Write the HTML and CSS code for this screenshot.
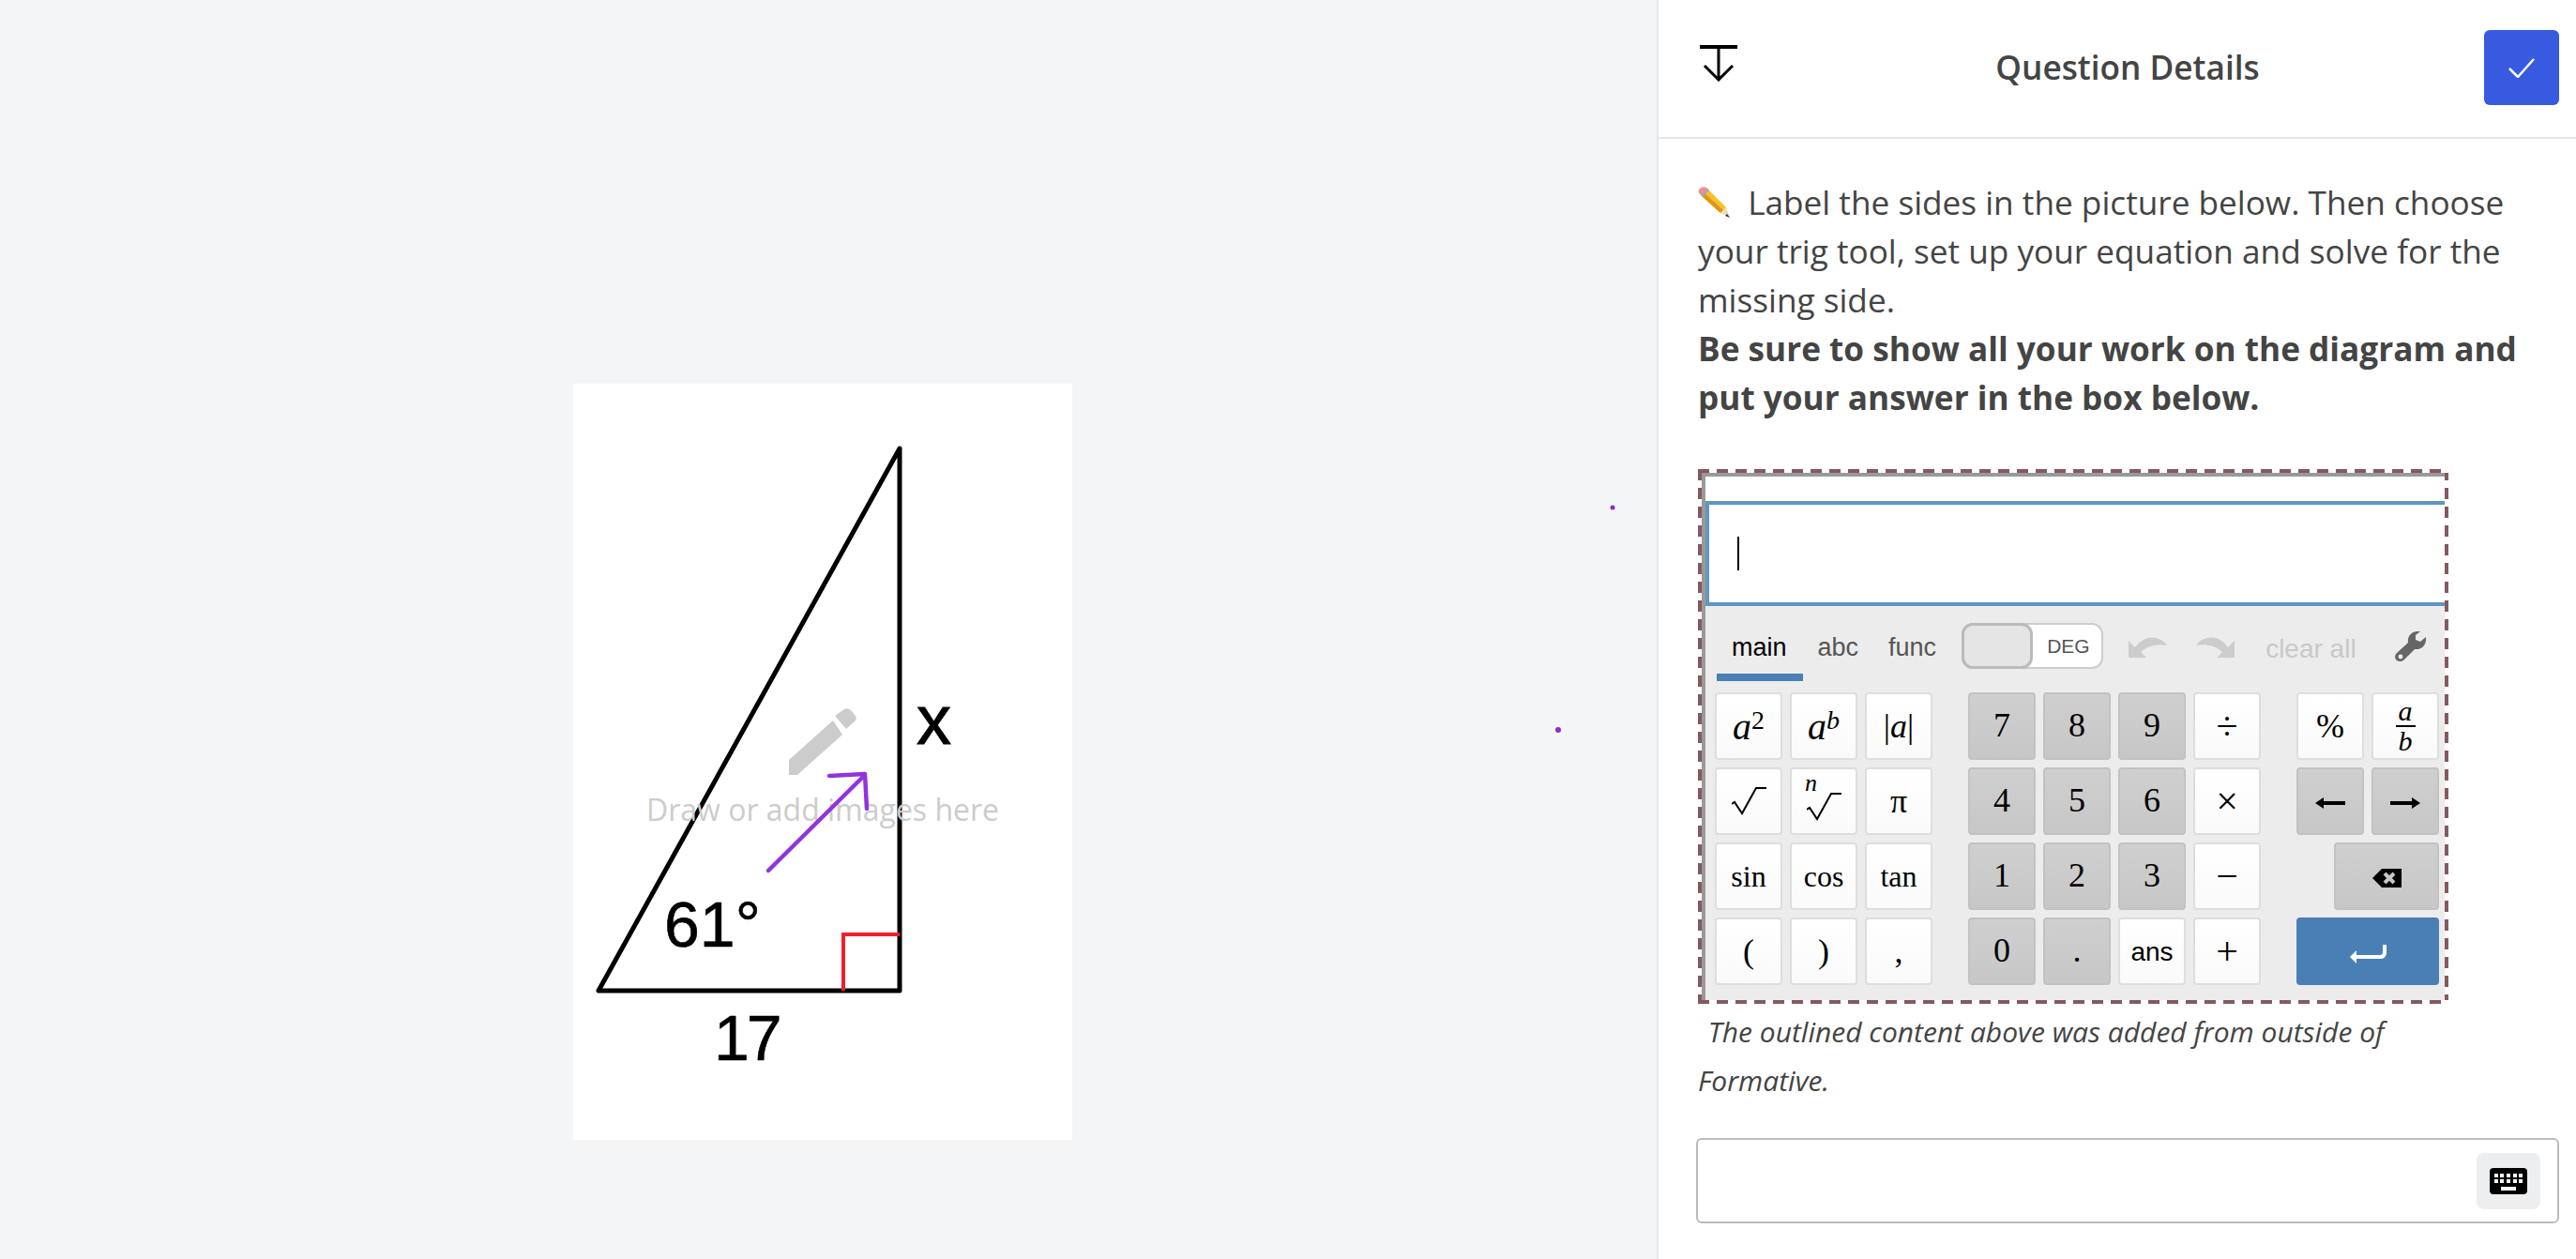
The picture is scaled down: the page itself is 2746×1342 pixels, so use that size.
FILE: index.html
```html
<!DOCTYPE html>
<html lang="en">
<head>
  <meta charset="UTF-8">
  <meta name="viewport" content="width=device-width, initial-scale=1.0">
  <title>Question Details</title>
  <link rel="stylesheet" href="styles.css">
</head>
<body>
  <div class="canvas">
    <div class="sheet">
      <!-- Worksheet picture -->
      <svg class="sheet-image" viewBox="0 0 532 806">
        <path class="tri" d="M348 69 L27 647 H348 Z"/>
        <path class="tri-mark" d="M348 587 H288 V647"/>
        <text class="tri-text" x="97" y="600" font-size="68">61°</text>
        <text class="tri-text tri-x" x="366" y="384" font-size="74">x</text>
        <text class="tri-text tri-17" x="150" y="721" font-size="68">17</text>
      </svg>
      <div class="hint">
        <svg class="hint-icon" viewBox="0 0 73 71">
          <path d="M0 55 L47 13 L57 28 L9 71 H0 Z"/>
          <path d="M49 8 L59 1 Q62 -1 66 2 L71 8 Q73 11 70 14 L61 22 Z"/>
        </svg>
        <div class="hint-text">Draw or add images here</div>
      </div>
    </div>
    <!-- Student ink on top of the canvas -->
    <svg class="ink" viewBox="0 0 1766 1342">
      <path d="M819 928 L922 826 M884 827 L922 825 L924 862"/>
      <circle cx="1719" cy="541" r="2.5"/>
      <circle cx="1661" cy="778" r="3"/>
    </svg>
  </div>

  <div class="panel">
    <div class="panel-header">
      <button class="collapse-btn" type="button">
        <svg width="40" height="39" viewBox="0 0 40 39">
          <path class="collapse-bar" d="M0 2 H40"/>
          <path d="M20 2 V37 M5 22 L20 37 L35 22"/>
        </svg>
      </button>
      <div class="panel-title">Question Details</div>
      <button class="done-btn" type="button">
        <svg width="28" height="21" viewBox="0 0 28 21"><path d="M1 11 L10 20 L27 1"/></svg>
      </button>
    </div>

    <div class="panel-body">
      <div class="prompt">
        <svg class="emoji" width="34" height="33" viewBox="0 0 34 33">
          <path fill="#f8c02c" d="M4 10 L11 3 L30 22 L24 28 Z"/>
          <path fill="#e2931a" d="M4 10 L7 7 L27 25 L24 28 Z"/>
          <path fill="#f6dcae" d="M24 28 L30 22 L34 33 Z"/>
          <path fill="#333" d="M31 29 L34 33 L29 31 Z"/>
          <path fill="#ef8f93" d="M2 8 Q-1 4 2 2 Q5 -1 9 1 L11 3 L4 10 Z"/>
          <path fill="#a4a9ad" d="M3 9 L10 2 L12 4 L5 11 Z"/>
        </svg>
        Label the sides in the picture below. Then choose your trig tool, set up your equation and solve for the missing side.<br>
        <strong>Be sure to show all your work on the diagram and put your answer in the box below.</strong>
      </div>

      <div class="embed">
        <div class="embed-inner">
          <div class="math-field"><span class="caret"></span></div>
          <div class="keypad">
            <div class="keypad-bar">
              <span class="tab tab-on">main</span>
              <span class="tab">abc</span>
              <span class="tab">func</span>
              <div class="deg-toggle"><span class="deg-knob"></span><span class="deg-label">DEG</span></div>
              <svg class="hist-icon undo" viewBox="0 0 41 24"><path d="M0 5 V23 H19 L13 17 C20 10 32 8 41 10 C33 -1 17 -2 7 12 Z"/></svg>
              <svg class="hist-icon redo" viewBox="0 0 41 24"><path d="M0 5 V23 H19 L13 17 C20 10 32 8 41 10 C33 -1 17 -2 7 12 Z"/></svg>
              <span class="clear-all">clear all</span>
              <svg class="wrench" viewBox="0 0 34 33">
                <path d="M33 6 L27 11 L22 9 L22 4 L27 0 C20 -1 13 3 14 12 L2 23 C-1 26 0 30 2 31 C5 33 8 32 10 30 L21 19 C29 20 34 14 33 6 Z"/>
                <circle cx="6" cy="27" r="2.4" fill="#ececec"/>
              </svg>
            </div>
            <div class="key-groups">
              <div class="key-group cols-3">
                <div class="key math"><i class="base">a</i><sup>2</sup></div>
                <div class="key math"><i class="base">a</i><sup><i>b</i></sup></div>
                <div class="key math">|<i>a</i>|</div>
                <div class="key">
                  <svg class="root-icon" width="37" height="30" viewBox="0 0 37 30"><path d="M0 18 L3 16 L11 28 L26 1 H37"/></svg>
                </div>
                <div class="key">
                  <span class="root-index">n</span>
                  <svg class="root-icon root-nth" width="37" height="30" viewBox="0 0 37 30"><path d="M0 18 L3 16 L11 28 L26 1 H37"/></svg>
                </div>
                <div class="key math">π</div>
                <div class="key fn">sin</div>
                <div class="key fn">cos</div>
                <div class="key fn">tan</div>
                <div class="key math">(</div>
                <div class="key math">)</div>
                <div class="key math">,</div>
              </div>
              <div class="key-group cols-4">
                <div class="key dark">7</div>
                <div class="key dark">8</div>
                <div class="key dark">9</div>
                <div class="key op">÷</div>
                <div class="key dark">4</div>
                <div class="key dark">5</div>
                <div class="key dark">6</div>
                <div class="key op">×</div>
                <div class="key dark">1</div>
                <div class="key dark">2</div>
                <div class="key dark">3</div>
                <div class="key op">−</div>
                <div class="key dark">0</div>
                <div class="key dark">.</div>
                <div class="key ans">ans</div>
                <div class="key op">+</div>
              </div>
              <div class="key-group cols-2">
                <div class="key math">%</div>
                <div class="key"><div class="frac"><i>a</i><i class="frac-b">b</i></div></div>
                <div class="key dark">
                  <svg class="nudge" width="32" height="14" viewBox="0 0 32 14"><path d="M0 7 L9 1 V5 H32 V9 H9 V13 Z"/></svg>
                </div>
                <div class="key dark">
                  <svg class="nudge" width="32" height="14" viewBox="0 0 32 14"><path d="M32 7 L23 1 V5 H0 V9 H23 V13 Z"/></svg>
                </div>
                <div class="key dark wide backspace">
                  <svg class="nudge" width="31" height="20" viewBox="0 0 31 20">
                    <path d="M10 0 H31 V20 H10 L0 10 Z"/>
                    <path class="backspace-x" d="M13 5 L23 15 M23 5 L13 15"/>
                  </svg>
                </div>
                <div class="key enter wide">
                  <svg class="nudge" width="39" height="20" viewBox="0 0 39 20"><path d="M37 0 V8 Q37 13 32 13 H5"/><path class="enter-head" d="M0 13 L7 6 V20 Z"/></svg>
                </div>
              </div>
            </div>
          </div>
        </div>
      </div>

      <div class="embed-note">&nbsp;The outlined content above was added from outside of Formative.</div>

      <div class="answer-box">
        <button class="kbd-btn" type="button">
          <svg width="40" height="28" viewBox="0 0 40 28">
            <rect width="40" height="28" rx="4"/>
            <path class="kbd-keys" d="M5 6h4v4h-4z M11 6h4v4h-4z M18 6h4v4h-4z M25 6h4v4h-4z M31 6h4v4h-4z M5 12h4v4h-4z M11 12h4v4h-4z M18 12h4v4h-4z M25 12h4v4h-4z M31 12h4v4h-4z M12 20h16v4h-16z"/>
          </svg>
        </button>
      </div>
    </div>
  </div>
</body>
</html>
```

FILE: styles.css
```css
html, body {
  height: 100%;
}
body {
  margin: 0;
  height: 1342px;
  overflow: hidden;
  display: flex;
  background: #f4f5f7;
  font-family: 'Open Sans', Arial, sans-serif;
  color: #444;
}

/* Canvas side */
.canvas {
  flex: 1;
  position: relative;
  padding: 409px 0 0 611px;
}
.sheet {
  position: relative;
  width: 532px;
  height: 806px;
  background: #fff;
}
.sheet-image {
  display: block;
  width: 532px;
  height: 806px;
}
.tri {
  fill: none;
  stroke: #000;
  stroke-width: 5;
  stroke-linejoin: round;
}
.tri-mark {
  fill: none;
  stroke: #f01f2c;
  stroke-width: 4;
}
.tri-text {
  font-family: 'Liberation Sans', Arial, sans-serif;
  fill: #000;
  stroke: #000;
  stroke-width: 0.6;
}
.tri-x {
  stroke-width: 1;
}
.tri-17 {
  letter-spacing: -3px;
}
.hint {
  position: absolute;
  top: 346px;
  left: 0;
  right: 0;
  display: flex;
  flex-direction: column;
  align-items: center;
  gap: 15px;
}
.hint-icon {
  width: 73px;
  height: 71px;
  fill: #ccc;
}
.hint-text {
  font-size: 32px;
  line-height: 44px;
  color: #ccc;
}
.ink {
  position: absolute;
  top: 0;
  left: 0;
  width: 1766px;
  height: 1342px;
  pointer-events: none;
}
.ink path {
  fill: none;
  stroke: #9333dc;
  stroke-width: 4.5;
  stroke-linecap: round;
  stroke-linejoin: round;
}
.ink circle {
  fill: #8a2bd0;
}

/* Question panel */
.panel {
  width: 980px;
  box-sizing: border-box;
  flex-shrink: 0;
  background: #fff;
  border-left: 2px solid #e5e7eb;
}
.panel-header {
  height: 148px;
  box-sizing: border-box;
  display: flex;
  align-items: center;
  padding: 0 18px 2px 44px;
  border-bottom: 2px solid #e5e7eb;
}
.collapse-btn {
  align-self: flex-start;
  margin-top: 48px;
  padding: 0;
  height: 39px;
  border: none;
  background: none;
}
.collapse-btn path {
  fill: none;
  stroke: #000;
  stroke-width: 3;
}
.collapse-btn .collapse-bar {
  stroke-width: 4;
}
.panel-title {
  flex: 1;
  padding: 0 0 3px 36px;
  text-align: center;
  font-size: 35.2px;
  font-weight: 600;
  color: #444;
}
.done-btn {
  width: 80px;
  height: 80px;
  padding: 0;
  display: flex;
  align-items: center;
  justify-content: center;
  border: none;
  border-radius: 6px;
  background: #375ae0;
}
.done-btn path {
  fill: none;
  stroke: #fff;
  stroke-width: 2.5;
}
.panel-body {
  padding: 41px 18px 0 42px;
}
.prompt {
  font-size: 35.2px;
  line-height: 52px;
  color: #444;
}
.emoji {
  vertical-align: -3px;
  margin-right: 10px;
}

/* Embedded calculator, the dashes are 12 on / 8 off */
.embed {
  width: 800px;
  height: 570px;
  box-sizing: border-box;
  margin-top: 51px;
  padding: 4px;
  background:
    repeating-linear-gradient(90deg, #845a5f 0 12px, #fff 12px 20px) top / 100% 4px no-repeat,
    repeating-linear-gradient(90deg, #845a5f 0 12px, #fff 12px 20px) bottom / 100% 4px no-repeat,
    repeating-linear-gradient(#845a5f 0 12px, #fff 12px 20px) left / 4px 100% no-repeat,
    repeating-linear-gradient(#845a5f 0 12px, #fff 12px 20px) right / 4px 100% no-repeat;
}
.embed-inner {
  height: 100%;
  box-sizing: border-box;
  padding-top: 26px;
  border-top: 4px solid #999;
  border-left: 4px solid #999;
  background: #fff;
}
.math-field {
  height: 112px;
  box-sizing: border-box;
  display: flex;
  align-items: center;
  padding-left: 30px;
  border: 4px solid #6096c0;
  border-right: none;
}
.caret {
  width: 2px;
  height: 36px;
  background: #000;
}
.keypad {
  height: 420px;
  box-sizing: border-box;
  padding: 0 6px 0 10px;
  background: #ececec;
  font-family: 'Liberation Sans', Arial, sans-serif;
}
.keypad-bar {
  height: 92px;
  box-sizing: border-box;
  display: flex;
  align-items: flex-start;
  margin-left: 2px;
  padding-top: 18px;
}
.tab {
  padding: 0 16px 2px;
  line-height: 52px;
  font-size: 27px;
  color: #555;
  border-bottom: 8px solid transparent;
}
.tab-on {
  padding: 0 17px 2px 16px;
  color: #000;
  border-bottom-color: #4a7fb6;
}
.deg-toggle {
  width: 151px;
  height: 49px;
  box-sizing: border-box;
  margin-left: 11px;
  display: flex;
  align-items: center;
  border: 2px solid #ccc;
  border-radius: 12px;
  background: #fff;
}
.deg-knob {
  width: 76px;
  height: 49px;
  margin-left: -2px;
  box-sizing: border-box;
  border: 3px solid #bbb;
  border-radius: 12px;
  background: #e5e5e5;
}
.deg-label {
  margin-left: 15px;
  font-size: 21px;
  color: #555;
}
.hist-icon {
  width: 41px;
  height: 24px;
  margin-top: 14px;
  fill: #ccc;
}
.undo {
  margin-left: 27px;
}
.redo {
  margin-left: 31px;
  transform: scaleX(-1);
}
.clear-all {
  margin-left: 33px;
  line-height: 56px;
  font-size: 28px;
  color: #c8c8c8;
}
.wrench {
  width: 34px;
  height: 33px;
  margin-left: 41px;
  margin-top: 9px;
  fill: #666;
}
.key-groups {
  display: flex;
  gap: 38px;
}
.key-group {
  display: grid;
  grid-auto-rows: 72px;
  grid-template-columns: repeat(var(--cols), 72px);
  gap: 8px;
}
.cols-3 { --cols: 3; }
.cols-4 { --cols: 4; }
.cols-2 { --cols: 2; }
.key {
  position: relative;
  box-sizing: border-box;
  display: flex;
  align-items: center;
  justify-content: center;
  border: 2px solid #dedede;
  border-radius: 4px;
  background: linear-gradient(#fff, #fafafa);
  font-family: 'Liberation Serif', 'Times New Roman', serif;
  font-size: 36px;
  color: #000;
}
.math {
  font-size: 36px;
}
.math .base {
  font-size: 40px;
}
.math sup {
  font-size: 28px;
  line-height: 0;
  position: relative;
  top: -6px;
  vertical-align: super;
}
.fn {
  font-size: 32px;
}
.op {
  font-size: 42px;
}
.ans {
  font-family: 'Liberation Sans', Arial, sans-serif;
  font-size: 28px;
  padding-top: 2px;
}
.dark {
  padding-bottom: 2px;
  border-color: #c2c2c2;
  background: linear-gradient(#cfcfcf, #c7c7c7);
}
.wide {
  grid-column: span 2;
}
.backspace {
  margin-left: 40px;
}
.enter {
  border-color: #4a7fb6;
  background: #4a7fb6;
}
.nudge {
  margin-top: 6px;
}
.backspace-x {
  fill: none;
  stroke: #c7c7c7;
  stroke-width: 4;
}
.enter path {
  fill: none;
  stroke: #fff;
  stroke-width: 4;
}
.enter .enter-head {
  fill: #fff;
  stroke: none;
}
.root-icon path {
  fill: none;
  stroke: #000;
  stroke-width: 2;
}
.root-nth {
  margin-top: 12px;
}
.root-index {
  position: absolute;
  top: 0;
  left: 14px;
  font-size: 26px;
  font-style: italic;
}
.frac {
  display: flex;
  flex-direction: column;
  align-items: center;
  font-size: 30px;
  line-height: 30px;
}
.frac-b {
  padding: 0 3px;
  border-top: 2px solid #000;
}

.embed-note {
  width: 800px;
  margin-top: 4px;
  font-size: 30px;
  line-height: 52px;
  font-style: italic;
  text-indent: 3px;
  color: #444;
}
.answer-box {
  height: 91px;
  box-sizing: border-box;
  margin: 35px 0 0 -2px;
  display: flex;
  align-items: center;
  justify-content: flex-end;
  padding-right: 18px;
  border: 2px solid #bbb;
  border-radius: 6px;
}
.kbd-btn {
  width: 68px;
  height: 60px;
  padding: 0;
  display: flex;
  align-items: center;
  justify-content: center;
  border: none;
  border-radius: 8px;
  background: #eceef0;
}
.kbd-keys {
  fill: #fff;
}
```
